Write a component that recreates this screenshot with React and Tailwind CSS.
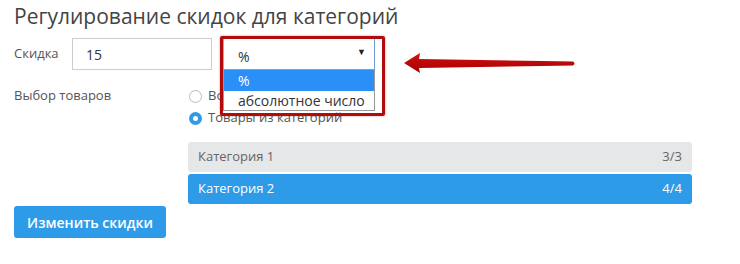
export default function App() {
  return (
    <div className="relative w-[740px] h-[264px] bg-white overflow-hidden pl-[14px] font-['Open_Sans',sans-serif]">
      <h1 className="pt-[2px] text-[21px] leading-[28px] text-[#444] font-normal">
        Регулирование скидок для категорий
      </h1>

      <div className="mt-[8px] flex items-center h-[32px]">
        <div className="w-[58px] text-[13px] text-[#555]">Скидка</div>
        <div className="w-[140px] h-[32px] border border-[#ccc] flex items-center pl-[13px] text-[14px] text-[#333]">
          15
        </div>
        <div className="ml-[11px] w-[152px] h-[32px] border border-[#aaa] border-r-[#6b9bd1] flex items-center justify-between pl-[14px] pr-[8px] text-[14px] text-[#333]">
          <span className="mt-[4px]">%</span>
          <span className="text-[9px] text-[#222] -mt-[4px]">▼</span>
        </div>
      </div>

      <div className="mt-[15px] flex">
        <div className="w-[175px] h-[22px] flex items-center text-[13px] text-[#555]">Выбор товаров</div>
        <div className="flex flex-col">
          <div className="h-[22px] flex items-center gap-[6px] text-[13px] text-[#555]">
            <span className="w-[13px] h-[13px] rounded-full border border-[#bbb] bg-white"></span>
            Во всех категориях
          </div>
          <div className="h-[22px] flex items-center gap-[6px] text-[13px] text-[#555]">
            <span className="w-[13px] h-[13px] rounded-full bg-[#2d9be8] flex items-center justify-center">
              <span className="w-[5px] h-[5px] rounded-full bg-white"></span>
            </span>
            Товары из категорий
          </div>
        </div>
      </div>

      <div className="mt-[13px] ml-[174px] w-[504px] flex flex-col gap-[2px]">
        <div className="h-[30px] rounded-[3px] bg-[#e6e7e8] flex items-center justify-between px-[10px] text-[13px] text-[#666]">
          <span>Категория 1</span>
          <span>3/3</span>
        </div>
        <div className="h-[30px] rounded-[3px] bg-[#2d9be8] flex items-center justify-between px-[10px] text-[13px] text-white">
          <span>Категория 2</span>
          <span>4/4</span>
        </div>
      </div>

      <button className="mt-[2px] w-[152px] h-[32px] rounded-[3px] bg-[#2d9be8] text-white text-[14px] font-semibold flex items-center justify-center">
        Изменить скидки
      </button>

      {/* native dropdown list */}
      <div className="absolute left-[223px] top-[69px] w-[152px] border border-[#999] bg-white text-[14px]">
        <div className="h-[21px] bg-[#2a8ff7] text-white pl-[14px] flex items-center">%</div>
        <div className="h-[19px] text-[#333] pl-[14px] flex items-center">абсолютное число</div>
      </div>

      {/* red annotation box */}
      <div className="absolute left-[220px] top-[36px] w-[165px] h-[80px] border-[3px] border-[#b10b0b] rounded-[2px] shadow-[0_0_2px_rgba(120,0,0,0.5)]"></div>

      {/* red arrow */}
      <svg className="absolute left-[400px] top-[48px]" width="180" height="30" viewBox="0 0 180 30">
        <defs>
          <linearGradient id="ag" x1="0" y1="0" x2="0" y2="1">
            <stop offset="0" stopColor="#d01010" />
            <stop offset="1" stopColor="#a80000" />
          </linearGradient>
        </defs>
        <path
          d="M4 15 L20 5 L19 11 L173 13.5 Q176 15.5 173 17.5 L19 20 L20 25 Z"
          fill="url(#ag)"
        />
      </svg>
    </div>
  );
}
